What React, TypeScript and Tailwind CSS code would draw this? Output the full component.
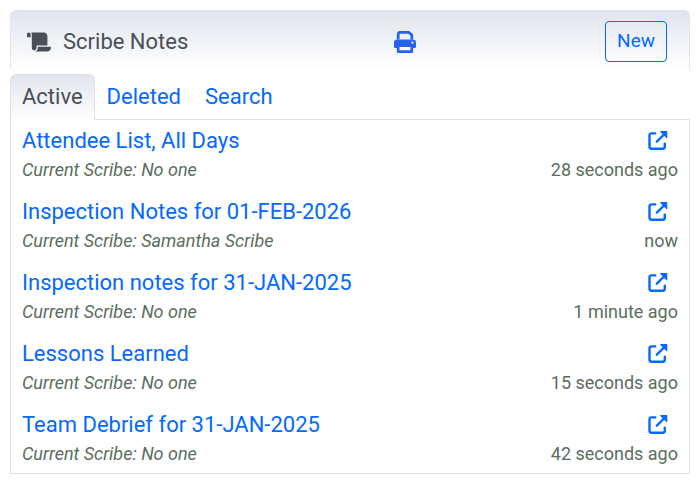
import { FaScroll } from 'react-icons/fa';

const notes = [
  { title: 'Attendee List, All Days', scribe: 'No one', updated: '28 seconds ago' },
  { title: 'Inspection Notes for 01-FEB-2026', scribe: 'Samantha Scribe', updated: 'now' },
  { title: 'Inspection notes for 31-JAN-2025', scribe: 'No one', updated: '1 minute ago' },
  { title: 'Lessons Learned', scribe: 'No one', updated: '15 seconds ago' },
  { title: 'Team Debrief for 31-JAN-2025', scribe: 'No one', updated: '42 seconds ago' },
];

function OpenIcon() {
  return (
    <svg viewBox="0 0 20 20" className="size-5" fill="none" stroke="currentColor" strokeWidth="2.4" strokeLinecap="round" strokeLinejoin="round">
      <path d="M7.2 2.4H3.4A1.9 1.9 0 0 0 1.5 4.3v11.5a1.9 1.9 0 0 0 1.9 1.9h11.5a1.9 1.9 0 0 0 1.9-1.9v-3.2" />
      <path d="M8.8 10.7 15.5 4" />
      <path d="M12.8.7h5.9v5.9z" fill="currentColor" strokeWidth="1.2" />
    </svg>
  );
}

function PrintIcon() {
  return (
    <svg viewBox="0 0 22 22" className="size-[22px]" fill="none" stroke="currentColor" strokeWidth="2.7" strokeLinejoin="round">
      <path d="M4.2 8.5V3.4a2 2 0 0 1 2-2h8.7l2.9 2.7v4.4" />
      <path
        d="M3 8.4h16a3 3 0 0 1 3 3v4.4a1.3 1.3 0 0 1-1.3 1.3H1.3A1.3 1.3 0 0 1 0 15.800v-4.400a3 3 0 0 1 3-3Z"
        fill="currentColor"
        stroke="none"
      />
      <path d="M4.200 14.600h13.600v6.050H4.200z" fill="white" />
      <circle cx="18.400" cy="11.600" r="1.100" fill="white" stroke="none" />
    </svg>
  );
}

export default function App() {
  return (
    <main className="px-2.5 pt-2.5 pb-3 font-[Roboto,sans-serif] text-[#495057]">
      <header className="grid grid-cols-[1.46fr_auto_1fr] items-center rounded-t-md border border-b-0 border-[#e1e5ea] bg-linear-to-b from-[#e0e5ee] to-white pt-2.5 pr-[22px] pb-[7px] pl-4">
        <h1 className="flex items-center gap-3 text-[22px]">
          <FaScroll className="h-5 w-6" />
          Scribe Notes
        </h1>
        <button type="button" aria-label="Print" className="text-[#2563eb]">
          <PrintIcon />
        </button>
        <button type="button" className="h-[41px] justify-self-end rounded border border-[#0569ff] px-[11px] text-[19px] text-[#0569ff]">
          New
        </button>
      </header>

      <nav className="mt-[5px] flex text-[22px] leading-[33px] text-[#0569ff]">
        <a href="#active" className="relative -mb-px rounded-t-md border border-b-0 border-[#dee2e6] bg-linear-to-b from-[#e0e5ee] to-white px-[11px] pt-[5px] pb-[7px] text-[#495057]">
          Active
        </a>
        <a href="#deleted" className="px-3 pt-1.5 pb-1.5">Deleted</a>
        <a href="#search" className="px-3 pt-1.5 pb-1.5">Search</a>
      </nav>

      <ul className="border border-[#dee2e6]">
        {notes.map((note) => (
          <li key={note.title} className="px-[11px] pt-1 pb-[9px] last:pb-[7px]">
            <div className="flex items-center justify-between pr-2.5 text-[22px] leading-[33px] text-[#0569ff]">
              <a href="#note">{note.title}</a>
              <a href="#open" aria-label="Open in new window">
                <OpenIcon />
              </a>
            </div>
            <div className="flex justify-between text-[18px] leading-[25px] text-[#5a6e5d]">
              <em>Current Scribe: {note.scribe}</em>
              <span>{note.updated}</span>
            </div>
          </li>
        ))}
      </ul>
    </main>
  );
}
